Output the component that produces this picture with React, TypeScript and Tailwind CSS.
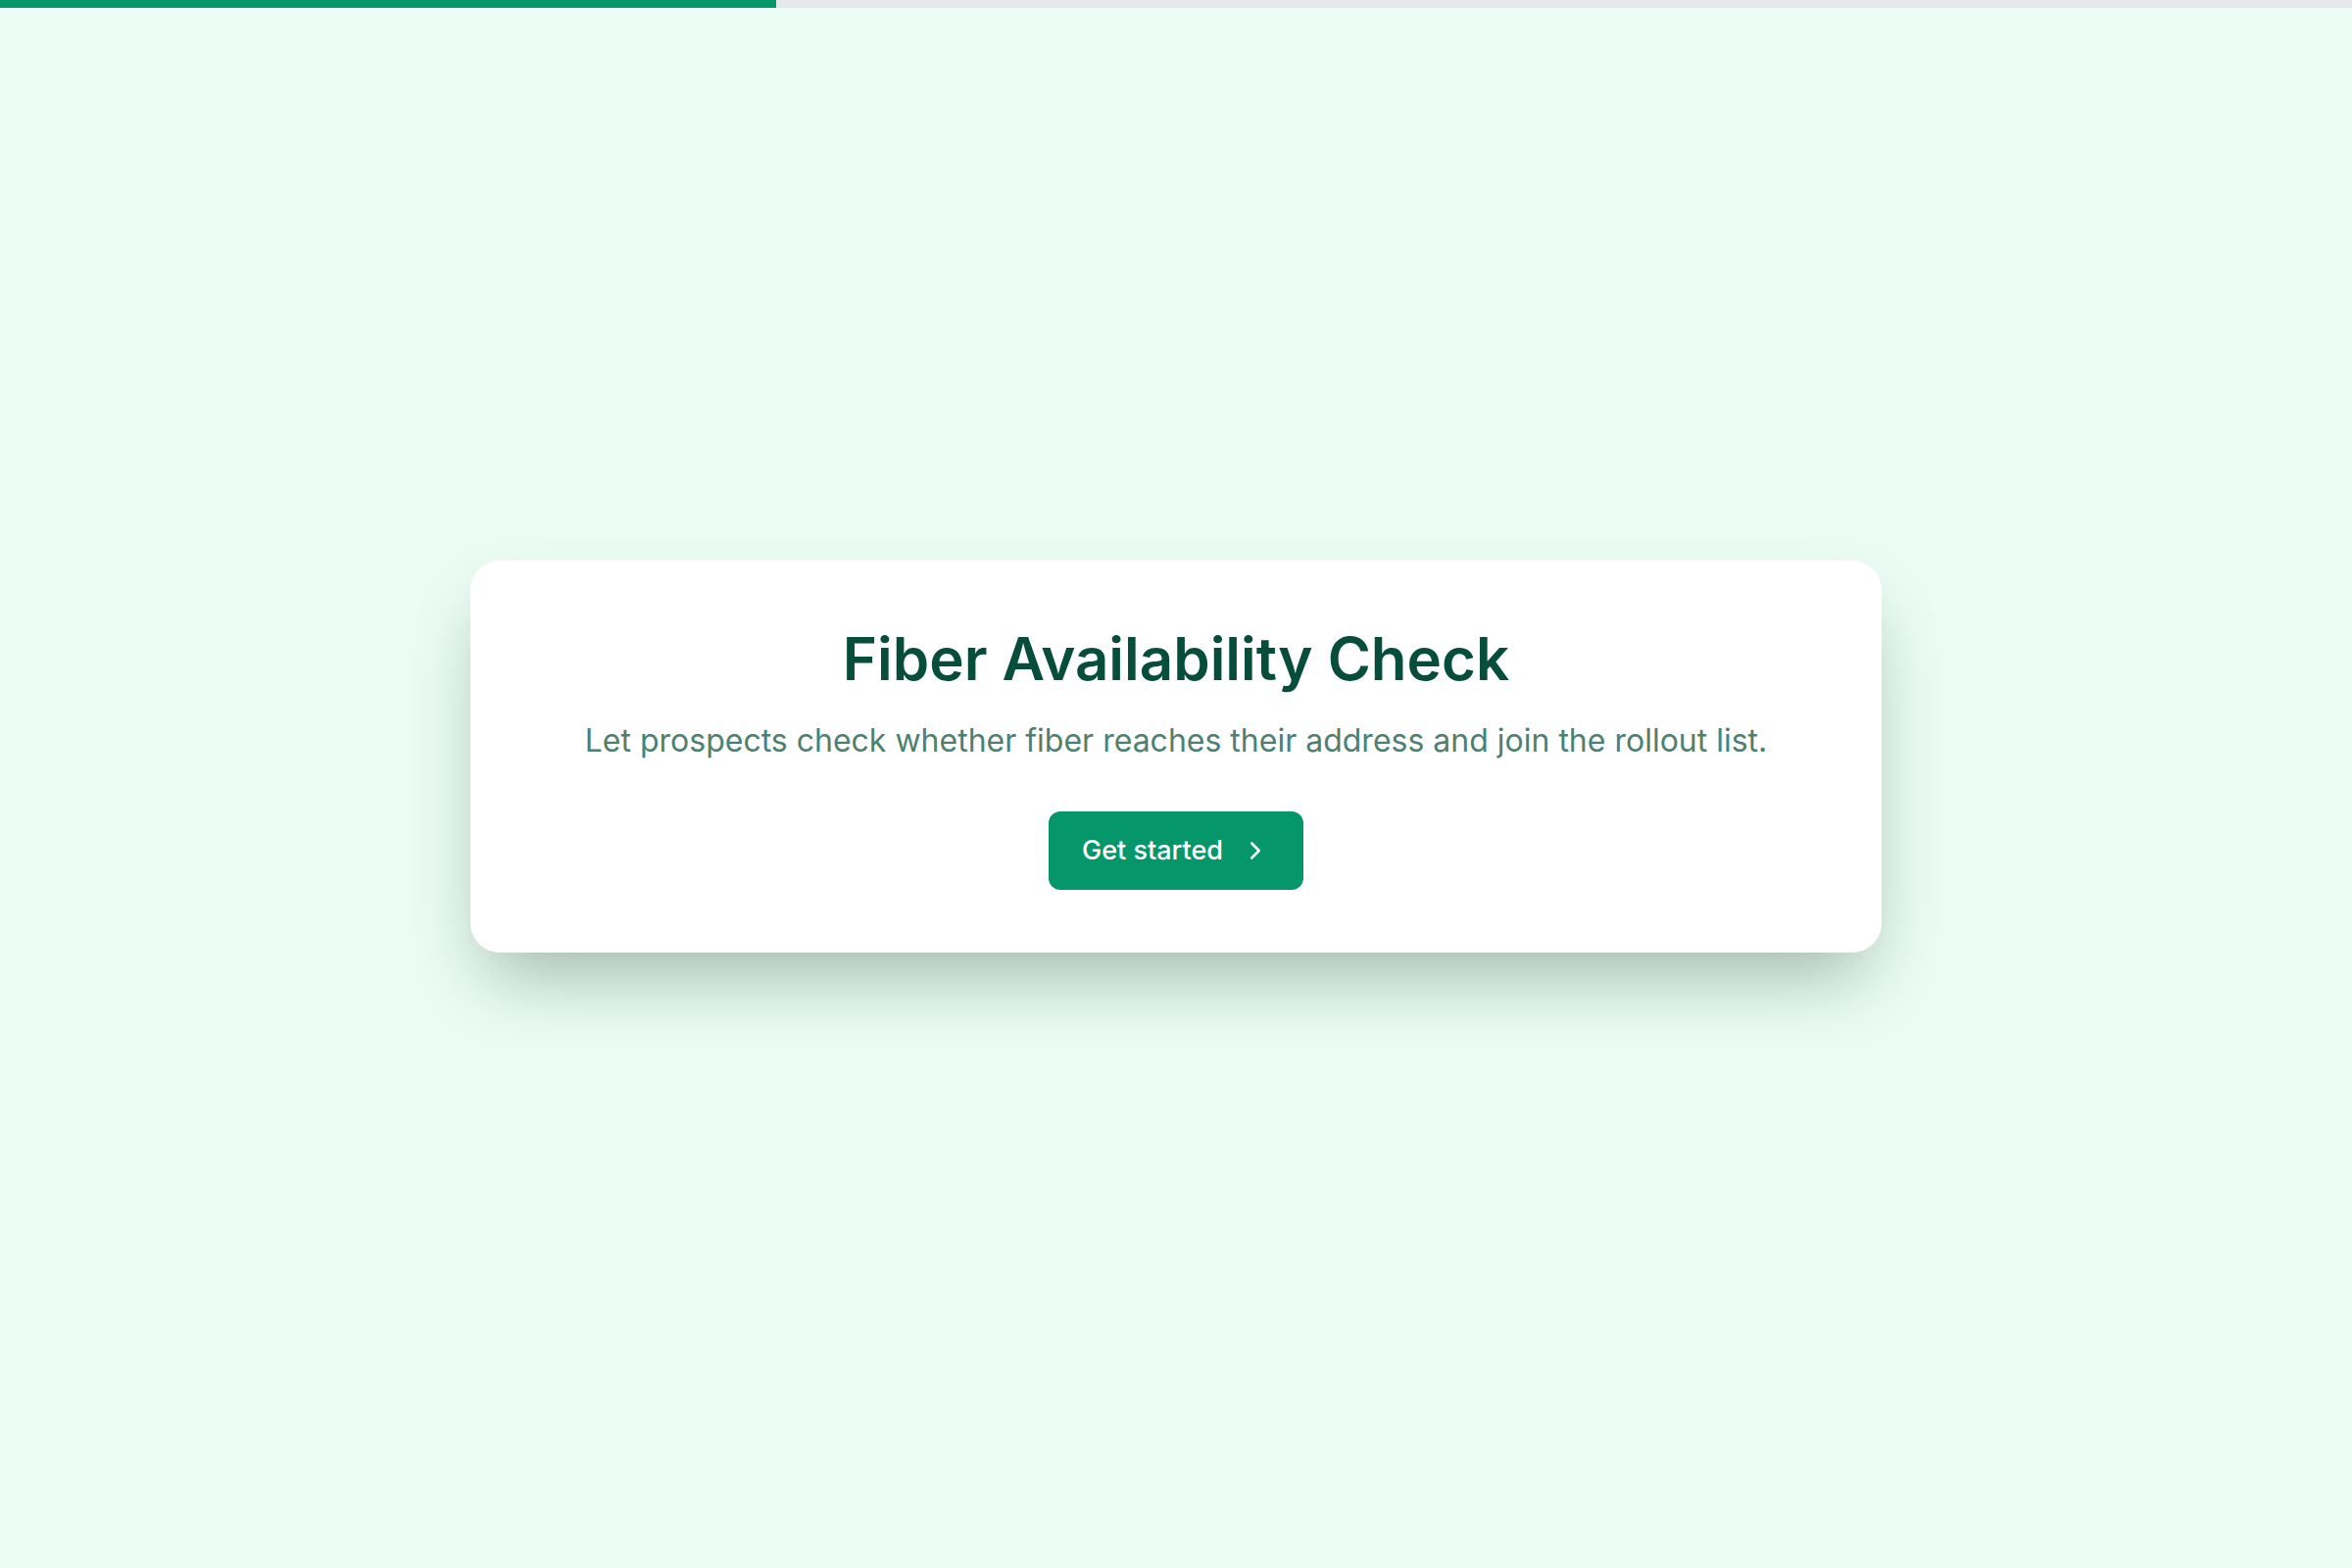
import React from "react";
import { ChevronRight } from "lucide-react";

export default function App() {
  return (
    <div className="min-h-screen w-full flex flex-col bg-[#eafcf3]" style={{ fontFamily: "Inter, 'Noto Sans', sans-serif" }}>
      <div className="h-2 w-full bg-[#e5e7eb] flex">
        <div className="h-full w-[33%] bg-[#059669]" />
      </div>
      <div className="flex-1 flex items-center justify-center pb-[64px]">
        <div className="w-[1440px] bg-white rounded-[30px] shadow-[0_38px_75px_-18px_rgba(0,30,15,0.32)] flex flex-col items-center pt-[64px] pb-[64px]">
          <h1 className="text-[60px] leading-[73px] font-semibold text-[#064e3b]">Fiber Availability Check</h1>
          <p className="mt-[23px] text-[32px] leading-[48px] text-[#4d8070]">
            Let prospects check whether fiber reaches their address and join the rollout list.
          </p>
          <button className="mt-[48px] h-[80px] w-[260px] rounded-[12px] bg-[#059669] text-white text-[27px] font-medium flex items-center justify-center gap-[18px]">
            <span>Get started</span>
            <ChevronRight size={30} strokeWidth={2} />
          </button>
        </div>
      </div>
    </div>
  );
}
